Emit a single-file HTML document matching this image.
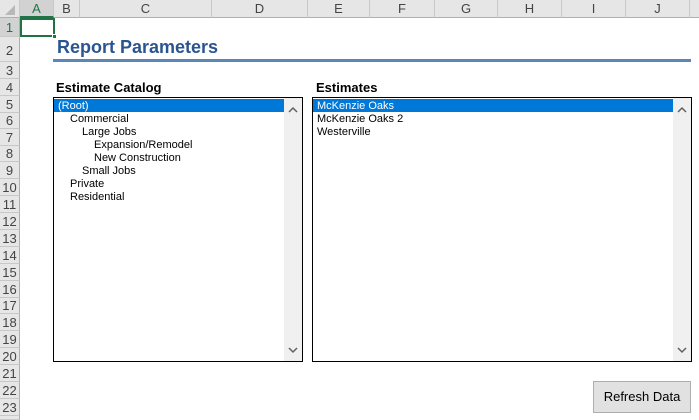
<!DOCTYPE html>
<html><head><style>
*{margin:0;padding:0;box-sizing:border-box}
body{width:699px;height:420px;overflow:hidden;background:#fff;font-family:"Liberation Sans",sans-serif;position:relative}
.abs{position:absolute}
.ch{position:absolute;top:0;height:18px;background:#e6e6e6;border-right:1px solid #c8c8c8;border-bottom:1px solid #b0b0b0;font-size:13px;color:#444;text-align:center;line-height:18px}
.rh{position:absolute;left:0;width:20px;background:#e6e6e6;border-right:1px solid #b0b0b0;border-bottom:1px solid #c8c8c8;font-size:13px;color:#444;text-align:center;font-family:"Liberation Sans Narrow","Liberation Sans",sans-serif}
.lb{position:absolute;border:1px solid #000;background:#fff}
.sb{position:absolute;right:0;top:0;bottom:0;width:18px;background:#f0f0f0}
.it{position:absolute;font-size:11px;height:13px;line-height:13px;color:#000;white-space:nowrap}
.sel{background:#0078d7;color:#fff}
.lbl{position:absolute;font-size:13px;font-weight:bold;color:#000}
</style></head><body>
<div class="ch" style="left:0;width:20px;background:#e6e6e6"><svg width="20" height="18"><polygon points="15,5 15,15 5,15" fill="#b8b8b8"/></svg></div>
<div class="ch" style="left:20px;width:34px;background:#d2d2d2;border-bottom:2px solid #217346;color:#217346">A</div>
<div class="ch" style="left:54px;width:26px">B</div>
<div class="ch" style="left:80px;width:132px">C</div>
<div class="ch" style="left:212px;width:96px">D</div>
<div class="ch" style="left:308px;width:62px">E</div>
<div class="ch" style="left:370px;width:65px">F</div>
<div class="ch" style="left:435px;width:63px">G</div>
<div class="ch" style="left:498px;width:64px">H</div>
<div class="ch" style="left:562px;width:64px">I</div>
<div class="ch" style="left:626px;width:64px">J</div>
<div class="ch" style="left:690px;width:9px;border-right:none"></div>

<div class="rh" style="top:18px;height:19px;line-height:19px;background:#d2d2d2;color:#217346">1</div>
<div class="rh" style="top:37px;height:25px;line-height:28px">2</div>
<div class="rh" style="top:62px;height:17px;line-height:17px">3</div>
<div class="rh" style="top:79px;height:17px;line-height:17px">4</div>
<div class="rh" style="top:96px;height:17px;line-height:17px">5</div>
<div class="rh" style="top:113px;height:16px;line-height:16px">6</div>
<div class="rh" style="top:129px;height:17px;line-height:17px">7</div>
<div class="rh" style="top:146px;height:16px;line-height:16px">8</div>
<div class="rh" style="top:162px;height:17px;line-height:17px">9</div>
<div class="rh" style="top:179px;height:17px;line-height:17px">10</div>
<div class="rh" style="top:196px;height:17px;line-height:17px">11</div>
<div class="rh" style="top:213px;height:17px;line-height:17px">12</div>
<div class="rh" style="top:230px;height:17px;line-height:17px">13</div>
<div class="rh" style="top:247px;height:17px;line-height:17px">14</div>
<div class="rh" style="top:264px;height:17px;line-height:17px">15</div>
<div class="rh" style="top:281px;height:17px;line-height:17px">16</div>
<div class="rh" style="top:298px;height:16px;line-height:16px">17</div>
<div class="rh" style="top:314px;height:17px;line-height:17px">18</div>
<div class="rh" style="top:331px;height:17px;line-height:17px">19</div>
<div class="rh" style="top:348px;height:17px;line-height:17px">20</div>
<div class="rh" style="top:365px;height:17px;line-height:17px">21</div>
<div class="rh" style="top:382px;height:17px;line-height:17px">22</div>
<div class="rh" style="top:399px;height:17px;line-height:17px">23</div>
<div class="rh" style="top:416px;height:4px"></div>

<div class="abs" style="left:20px;top:18px;width:35px;height:19px;border:2px solid #217346"></div>
<div class="abs" style="left:52px;top:34px;width:5px;height:5px;background:#217346;border:1px solid #fff"></div>

<div class="abs" style="left:57px;top:37px;font-size:18px;font-weight:bold;color:#2b5591">Report Parameters</div>
<div class="abs" style="left:53px;top:59px;width:638px;height:3px;background:#5b86b8"></div>

<div class="lbl" style="left:56px;top:80px">Estimate Catalog</div>
<div class="lbl" style="left:316px;top:80px">Estimates</div>

<div class="lb" style="left:53px;top:97px;width:250px;height:265px">
<div class="it sel" style="left:0;top:1px;width:230px;padding-left:4px;line-height:14px">(Root)</div>
<div class="it" style="left:16px;top:15px">Commercial</div>
<div class="it" style="left:28px;top:28px">Large Jobs</div>
<div class="it" style="left:40px;top:41px">Expansion/Remodel</div>
<div class="it" style="left:40px;top:54px">New Construction</div>
<div class="it" style="left:28px;top:67px">Small Jobs</div>
<div class="it" style="left:16px;top:80px">Private</div>
<div class="it" style="left:16px;top:93px">Residential</div>
<div class="sb"><svg width="18" height="263"><path d="M5 14 L9 10 L13 14" stroke="#606060" stroke-width="1.5" fill="none"/><path d="M5 250 L9 254 L13 250" stroke="#606060" stroke-width="1.5" fill="none"/></svg></div>
</div>

<div class="lb" style="left:312px;top:97px;width:380px;height:265px">
<div class="it sel" style="left:0;top:1px;width:360px;padding-left:4px;line-height:14px">McKenzie Oaks</div>
<div class="it" style="left:4px;top:15px">McKenzie Oaks 2</div>
<div class="it" style="left:4px;top:28px">Westerville</div>
<div class="sb"><svg width="18" height="263"><path d="M5 14 L9 10 L13 14" stroke="#606060" stroke-width="1.5" fill="none"/><path d="M5 250 L9 254 L13 250" stroke="#606060" stroke-width="1.5" fill="none"/></svg></div>
</div>

<div class="abs" style="left:593px;top:381px;width:98px;height:32px;background:#e1e1e1;border:1px solid #adadad;font-size:13px;text-align:center;line-height:30px;color:#000">Refresh Data</div>
</body></html>
